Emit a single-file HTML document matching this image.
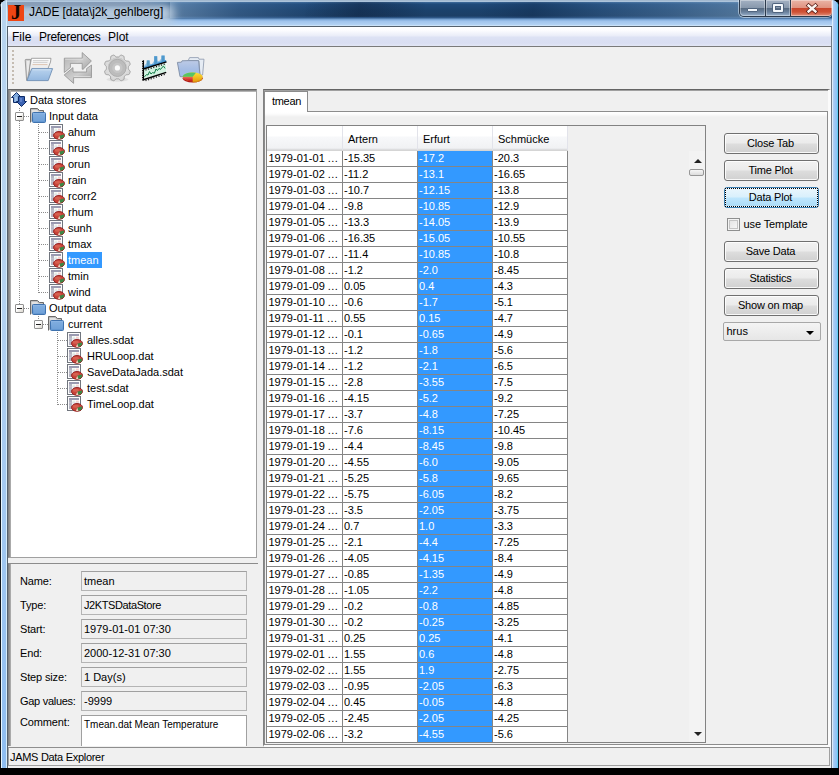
<!DOCTYPE html>
<html><head><meta charset="utf-8"><title>JADE</title>
<style>
*{box-sizing:border-box;margin:0;padding:0}
html,body{width:839px;height:775px;overflow:hidden;background:#000}
body{font-family:"Liberation Sans",sans-serif;font-size:11px;color:#000;position:relative}
.abs{position:absolute}
#win{position:absolute;left:0;top:0;width:839px;height:768px;background:#b9d6f0;border-radius:8px 8px 0 0;overflow:hidden}
#title{position:absolute;left:0;top:0;width:839px;height:27px;
 background:linear-gradient(to bottom,#7f99b6 0,#c5d9ea 1px,#9fb8d2 1.8px,#3d6a9a 2.2px,#1f4a7a 4px,#1b426c 10px,#1c3f66 16px,#2d5686 17.5px,#7aa5d4 19.5px,#9fc3ec 21px,#b4d3f3 25px,#e0f0fc 26px)}
#streak3{position:absolute;left:305px;top:2px;width:120px;height:15px;background:linear-gradient(100deg,rgba(8,22,46,0) 0,rgba(8,22,46,.38) 45%,rgba(8,22,46,.30) 60%,rgba(8,22,46,0) 100%)}
#streak1{position:absolute;left:170px;top:2px;width:230px;height:16px;background:linear-gradient(100deg,rgba(140,175,210,.55) 0,rgba(90,130,175,.35) 30%,rgba(60,100,150,.12) 60%,rgba(30,60,100,0) 100%)}
#streak2{position:absolute;left:480px;top:2px;width:270px;height:16px;background:linear-gradient(100deg,rgba(10,30,60,0) 0,rgba(10,30,60,.25) 20%,rgba(90,130,175,.18) 45%,rgba(120,160,200,.30) 70%,rgba(150,185,215,.45) 100%)}
#titleglow{position:absolute;left:-12px;top:3px;width:186px;height:22px;background:rgba(188,207,226,.96);filter:blur(5px);border-radius:8px}
#titleglow2{position:absolute;left:1px;top:2px;width:160px;height:4px;background:linear-gradient(to right,rgba(140,160,185,.9),rgba(140,160,185,.7) 80%,rgba(140,160,185,0))}
#ttext{position:absolute;left:29px;top:5px;font-size:12px;line-height:15px;letter-spacing:-.08px;color:#000;white-space:nowrap}
#frameL{position:absolute;left:0;top:0;width:7px;height:768px;background:linear-gradient(to right,#10151c 0,#10151c 1px,#e8f6fd 1px,#e8f6fd 2px,rgba(255,255,255,0) 2px,rgba(255,255,255,0) 6px,#d6ecfa 6px,#d6ecfa 7px),linear-gradient(to bottom,#b8d4ee 0,#b4d2f0 300px,#8ebdf0 768px)}
#frameLl{position:absolute;left:7px;top:26px;width:1px;height:742px;background:#55616d}
#frameR{position:absolute;left:832px;top:0;width:7px;height:768px;background:linear-gradient(to right,#dcecfb 0,#dcecfb 1px,#b4d0f2 1px,#9cc6f4 3px,#8cc2f4 5px,#62cdf2 5px,#62cdf2 6px,#0c1c2c 6px,#0c1c2c 7px)}
#frameRl{position:absolute;left:831px;top:26px;width:1px;height:742px;background:#6e7a86}
#client{position:absolute;left:8px;top:27px;width:823px;height:741px;background:#f0f0f0;overflow:hidden}
#ctop{position:absolute;left:7px;top:26px;width:825px;height:1px;background:#55616d}
#menubar{position:absolute;left:0;top:0;width:823px;height:20px;background:linear-gradient(to bottom,#fff 0,#fdfdff 3px,#e9ecf8 9px,#dde2f4 10px,#d9def2 16px,#e2e6f5 19px);border-bottom:1px solid #7a7a7a;font-size:12px}
#menubar span{position:absolute;top:3px;line-height:14px;white-space:nowrap}

#toolbar{position:absolute;left:0;top:20px;width:823px;height:42px}
#grip{position:absolute;left:4px;top:3px;width:2px;height:36px;background:repeating-linear-gradient(to bottom,#c4bcb2 0,#c4bcb2 2px,transparent 2px,transparent 4px)}
.tbi{position:absolute}
#treeP{position:absolute;left:0;top:62px;width:249px;height:469px;background:#fff;border-top:1px solid #646464;border-left:1px solid #828282;border-right:1px solid #a0a0a0;border-bottom:1px solid #a0a0a0}
#treeP:before{content:"";position:absolute;left:0;top:0;width:100%;height:2px;background:linear-gradient(#8a8a8a 0,#8a8a8a 1px,#b4b4b4 1px,#b4b4b4 2px)}
#treeP:after{content:"";position:absolute;left:0;top:0;width:2px;height:100%;background:linear-gradient(to right,#929292 0,#929292 1px,#aaa 1px,#aaa 2px)}
.tn{position:absolute;height:16px;line-height:16px;white-space:nowrap;font-size:11px}
.tn.sel{background:#3399ff;color:#fff;padding:0 3px 0 1px;margin-left:-1px}
.ico{position:absolute;width:16px;height:16px}
.bx{position:absolute;width:9px;height:9px;border:1px solid #919191;background:linear-gradient(135deg,#fff 0,#fff 40%,#d9d5cc 100%);border-radius:1px}
.bx:after{content:"";position:absolute;left:1px;top:3px;width:5px;height:1px;background:#222}
.vd{position:absolute;width:1px;background:repeating-linear-gradient(to bottom,#8c8c8c 0,#8c8c8c 1px,transparent 1px,transparent 2px)}
.hd{position:absolute;height:1px;background:repeating-linear-gradient(to right,#8c8c8c 0,#8c8c8c 1px,transparent 1px,transparent 2px)}
#propP{position:absolute;left:0;top:536px;width:250px;height:183px;border-top:1px solid #8c8c8c;border-left:1px solid #828282;overflow:hidden}
#propP:after{content:"";position:absolute;left:0;top:0;width:2px;height:100%;background:linear-gradient(to right,#929292 0,#929292 1px,#aaa 1px,#aaa 2px)}
.pl{position:absolute;left:11px;height:20px;line-height:20px;white-space:nowrap;letter-spacing:-.15px}
.pf{position:absolute;left:72px;width:166px;height:20px;border:1px solid #b4b4b4;border-top-color:#a0a0a0;line-height:18px;padding-left:2px;white-space:nowrap;background:#f0f0f0}
#status{position:absolute;left:0;top:720px;width:822px;height:19px;border:1px solid #a0a0a0;border-top-color:#8e8e8e;line-height:18px;padding-left:1px;letter-spacing:-.3px;white-space:nowrap}

#rightP{position:absolute;left:255px;top:62px;width:568px;height:658px;border-top:1px solid #646464;border-left:1px solid #828282;border-right:3px solid #fbfbfb;border-bottom:2px solid #fbfbfb}
#rightP:before{content:"";position:absolute;left:0;top:0;width:100%;height:1px;background:#a0a0a0}
#tab{position:absolute;left:0;top:1px;width:44px;height:21px;background:#fff;border:1px solid #8c8c8c;border-bottom:none;line-height:18px;padding-left:7px;z-index:2;letter-spacing:-.3px}
#tabC{position:absolute;left:0;top:21px;width:564px;height:634px;border:1px solid #8c8c8c;background:linear-gradient(to bottom,#fff 0,#fcfcfc 2px,#f0f0f0 5px)}
#sp{position:absolute;left:1px;top:13px;width:440px;height:618px;border:1px solid #828282;background:#f0f0f0;overflow:hidden}
#th{position:absolute;left:0;top:0;width:301px;height:25px;background:linear-gradient(to bottom,#fff 0,#fff 10px,#f7f8fa 11px,#f1f2f4 22px,#e4e5e8 23px,#d5d5d5 24px,#d5d5d5 25px)}
.thc{position:absolute;top:0;height:24px;line-height:26px;padding-left:5px;width:75px;border-right:1px solid #e2e3ea}
#tb{position:absolute;left:0;top:25px;width:301px;height:595px;background:#fff}
.tr{position:absolute;left:0;width:301px;height:16px;border-bottom:1px solid #858585}
.c{position:absolute;top:0;height:15px;line-height:15px;white-space:nowrap;overflow:hidden;padding-left:1px;border-right:1px solid #858585}
.c0{left:0;width:76px;padding-left:1.5px}
.c0 b{font-weight:normal;letter-spacing:.45px}
.c1{left:76px;width:75px}
.c2{left:151px;width:75px;background:#3399ff;color:#fff}
.c3{left:226px;width:75px}
#sb{position:absolute;left:422px;top:25px;width:16px;height:591px;background:#f3f3f3}
.arr{position:absolute;left:5px;width:0;height:0;border-left:4px solid transparent;border-right:4px solid transparent}
#thumb{position:absolute;left:0;top:18px;width:15px;height:7px;border:1px solid #979797;border-radius:2px;background:linear-gradient(to bottom,#f6f6f6,#dcdcdc)}
.btn{position:absolute;left:459px;width:95px;height:21px;padding-right:2px;border:1px solid #707070;border-radius:3px;background:linear-gradient(to bottom,#f2f2f2 0,#ebebeb 9px,#dddddd 10px,#cfcfcf 20px);box-shadow:inset 0 0 0 1px rgba(255,255,255,.85);text-align:center;line-height:19px;white-space:nowrap;letter-spacing:-.2px}
.btn.foc{border-color:#3c7fb1;background:linear-gradient(to bottom,#eaf6fd 0,#d9f0fc 9px,#bee6fd 10px,#a7d9f5 20px)}
.btn.foc:after{content:"";position:absolute;left:0;top:0;right:0;bottom:0;border:1px dotted #000}
#cb{position:absolute;left:462px;top:106px;width:13px;height:13px;border:1px solid #8e8f8f;background:linear-gradient(135deg,#e0e0e0,#fafafa);box-shadow:inset 0 0 0 1px #f4f4f4, inset 0 0 0 2px #c4c4c4}
#cbl{position:absolute;left:478.5px;top:104px;line-height:16px;white-space:nowrap;letter-spacing:-.1px}
#combo{position:absolute;left:458px;top:210px;width:98px;height:19px;border:1px solid #a8a8a8;border-radius:2px;background:linear-gradient(to bottom,#f4f4f4,#e6e6e6);line-height:16px;padding-left:2.5px}
#combo:after{content:"";position:absolute;right:6px;top:8px;border-left:4px solid transparent;border-right:4px solid transparent;border-top:4px solid #000}

#ticon{position:absolute;left:8px;top:5px;width:16px;height:16px;background:#ee4614;overflow:hidden}
#ticon span{position:absolute;left:3px;top:-3px;font-family:"Liberation Serif",serif;font-weight:bold;font-size:20px;line-height:20px;color:#120600}
#capbtn{position:absolute;left:739px;top:0;width:93px;height:17px;border:1px solid #2c3a4c;border-top:none;border-radius:0 0 5px 5px;box-shadow:0 0 0 1px rgba(225,238,250,.55)}
.cbn{position:absolute;top:0;height:16px;border-right:1px solid #2c3a4c;background:linear-gradient(to bottom,#a3b1c3 0,#8999ad 7.5px,#56697f 8px,#6a819d 12px,#9ab2cc 16px);box-shadow:inset 0 0 0 1px rgba(255,255,255,.35)}
.cbn i{position:absolute;display:block}
.cbn.cls{border-right:none;background:linear-gradient(to bottom,#eab4a6 0,#e09482 7.5px,#c8442a 8px,#cf5236 12px,#e0907c 16px)}
</style></head><body>
<svg width="0" height="0" style="position:absolute"><defs>
<linearGradient id="gFold" x1="0" y1="0" x2="0" y2="1"><stop offset="0" stop-color="#8fb8e6"/><stop offset="1" stop-color="#5e93cf"/></linearGradient>
<linearGradient id="gGray" x1="0" y1="0" x2="1" y2="1"><stop offset="0" stop-color="#d8d8d8"/><stop offset="1" stop-color="#9a9a9a"/></linearGradient>
<symbol id="i-root" viewBox="0 0 16 16">
 <path d="M5.5 0.5 L10.5 5.5 L8.5 5.5 L8.5 10.5 L2.5 10.5 L2.5 5.5 L0.5 5.5 Z" fill="#7da7dc" stroke="#0d2a66" stroke-width="1"/>
 <path d="M7.5 4.5 L13.5 4.5 L13.5 9.5 L15.5 9.5 L10.5 14.5 L5.5 9.5 L7.5 9.5 Z" fill="#3c64b4" stroke="#0d2a66" stroke-width="1"/>
 <rect x="4" y="5" width="2" height="4" fill="#a9c8ee" opacity=".7"/><rect x="9" y="6" width="2" height="4" fill="#6d90d4" opacity=".7"/>
</symbol>
<symbol id="i-folder" viewBox="0 0 16 16">
 <path d="M0.5 14.5 L0.5 0.5 L7.5 0.5 L9.5 2.5 L13.5 2.5 L13.5 4.5" fill="#b4b4b4" stroke="#6a6a6a"/>
 <path d="M1.5 13.5 L1.5 1.8 L7 1.8 L8.6 3.4 L12.5 3.4 L12.5 4.5 L2 4.5 Z" fill="#e2e2e2" stroke="none"/>
 <rect x="2.5" y="4.5" width="13" height="10" rx="1" fill="url(#gFold)" stroke="#3f72ae"/>
 <rect x="4" y="6" width="10" height="7" fill="#7aa8dc" opacity=".6"/>
</symbol>
<symbol id="i-leaf" viewBox="0 0 16 16">
 <rect x="0.5" y="0.5" width="13" height="14" fill="#fdfdfd" stroke="#70757d"/>
 <rect x="2" y="2" width="10" height="2" fill="#9a9ab0"/>
 <rect x="2" y="4" width="3" height="9" fill="#b4b4c2"/>
 <rect x="5.6" y="4.6" width="2.6" height="2" fill="#e4efe6"/><rect x="9" y="4.6" width="2.8" height="2" fill="#f4d2cf"/>
 <rect x="5.6" y="7.2" width="2.6" height="2" fill="#ececf2"/><rect x="9" y="7.2" width="2.8" height="2" fill="#f1dedc"/>
 <path d="M2 6.8h10M2 9.6h4" stroke="#d0d0da" stroke-width=".6"/>
 <ellipse cx="10" cy="11.4" rx="5.5" ry="3.9" fill="#c8443a" stroke="#8e1a18" stroke-width=".9"/>
 <ellipse cx="8.8" cy="10.3" rx="3" ry="1.5" fill="#dc6a58" opacity=".75"/>
 <path d="M10.2 11.8 L14.9 10.6 A5.2 3.6 0 0 1 11.4 14.9 Z" fill="#3c8746"/>
 <path d="M10.2 11.8 L11.4 14.9 A5.2 3.6 0 0 1 9 14.9 Z" fill="#ead9c2"/>
</symbol>
</defs></svg>
<div id="win">
 <div id="title"></div><div id="streak1"></div><div id="streak2"></div><div id="streak3"></div><div id="titleglow"></div><div id="titleglow2"></div>
 <div id="frameL"></div><div id="frameLl"></div><div id="frameR"></div><div id="frameRl"></div><div id="ctop"></div>
 <div id="ttext">JADE [data\j2k_gehlberg]</div>
 <div id="client">
  <div id="menubar"><span style="left:4px">File</span><span style="left:31px;letter-spacing:-.3px">Preferences</span><span style="left:100px">Plot</span></div>
<div id="toolbar"><div id="grip"></div>
<svg class="tbi" style="left:12px;top:1px" width="40" height="40" viewBox="0 0 40 40">
 <defs><linearGradient id="gOF" x1="0" y1="0" x2="0" y2="1"><stop offset="0" stop-color="#b9d3ee"/><stop offset="1" stop-color="#93b7df"/></linearGradient>
 <linearGradient id="gPap" x1="0" y1="0" x2="0" y2="1"><stop offset="0" stop-color="#ffffff"/><stop offset="1" stop-color="#d4d4d4"/></linearGradient></defs>
 <path d="M5.2 12.2 Q5.2 11.4 6 11.4 L10.6 11.4 L10 20 L7.4 32.4 L6.6 32.4 Z" fill="#cfcfcf" stroke="#8c8c8c" stroke-width=".8"/>
 <path d="M6.6 13 L9.6 13 L9 20 L7.2 29 Z" fill="#ebebeb"/>
 <path d="M11.5 10.3 L31 10.3 L30.5 14 L28 20.5 L9 31 L9.5 20 Z" fill="url(#gPap)" stroke="#8e8e8e" stroke-width=".8"/>
 <path d="M13 12.6 L28.5 12.6 M13 14.4 L27.5 14.4" stroke="#c4c4c4" stroke-width=".8"/><path d="M12.5 16.6 L27.5 16.6" stroke="#d8b8a0" stroke-width=".8"/>
 <path d="M11.8 20.6 L32.6 20.6 L28.2 32.6 L7 32.6 Z" fill="url(#gOF)" stroke="#6f90b6" stroke-width=".9" stroke-linejoin="round"/>
 <path d="M12.6 21.8 L31 21.8" stroke="#d6e6f6" stroke-width=".8"/>
</svg>
<svg class="tbi" style="left:50px;top:1px" width="40" height="40" viewBox="0 0 40 40">
 <defs><linearGradient id="gAr" x1="0" y1="0" x2="1" y2="1"><stop offset="0" stop-color="#adadad"/><stop offset=".5" stop-color="#cecece"/><stop offset="1" stop-color="#9a9a9a"/></linearGradient></defs>
 <path d="M6.3 10.2 L24.2 10.2 L24.2 4.6 L33.4 13 L25.2 21.2 L24.2 21.2 L24.2 15.4 L12.4 15.4 L12.4 19.5 L6.3 24.5 Z" fill="url(#gAr)" stroke="#929292" stroke-width=".8"/>
 <path d="M33.5 17 L33.5 29.6 L15.6 29.6 L15.6 35.4 L6.2 27 L15 19.6 L15 24 L28.6 24 L28.6 20.6 Z" fill="url(#gAr)" stroke="#929292" stroke-width=".8"/>
 <path d="M7.2 11.2 L24.8 11.2 M16 28.6 L32.6 28.6" stroke="#e4e4e4" stroke-width=".8"/>
</svg>
<svg class="tbi" style="left:90px;top:1px" width="40" height="40" viewBox="0 0 40 40">
 <defs><radialGradient id="gGe" cx=".5" cy=".45" r=".6"><stop offset="0" stop-color="#c6c6c6"/><stop offset=".6" stop-color="#cdcdcd"/><stop offset=".62" stop-color="#dedede"/><stop offset="1" stop-color="#d2d2d2"/></radialGradient></defs>
 <ellipse cx="19.5" cy="31.5" rx="11" ry="2.2" fill="#d8d8d8" opacity=".7"/>
 <path d="M31.78 25.03 L31.51 25.63 L31.22 26.22 L30.49 26.55 L29.54 26.68 L28.61 26.73 L27.90 26.88 L27.55 27.29 L27.18 27.68 L26.79 28.05 L26.38 28.40 L26.23 29.11 L26.18 30.04 L26.05 30.99 L25.72 31.72 L25.13 32.01 L24.53 32.28 L23.91 32.52 L23.29 32.72 L22.54 32.45 L21.78 31.87 L21.08 31.24 L20.48 30.85 L19.94 30.89 L19.40 30.90 L18.86 30.89 L18.32 30.85 L17.72 31.24 L17.02 31.87 L16.26 32.45 L15.51 32.72 L14.89 32.52 L14.27 32.28 L13.67 32.01 L13.08 31.72 L12.75 30.99 L12.62 30.04 L12.57 29.11 L12.42 28.40 L12.01 28.05 L11.62 27.68 L11.25 27.29 L10.90 26.88 L10.19 26.73 L9.26 26.68 L8.31 26.55 L7.58 26.22 L7.29 25.63 L7.02 25.03 L6.78 24.41 L6.58 23.79 L6.85 23.04 L7.43 22.28 L8.06 21.58 L8.45 20.98 L8.41 20.44 L8.40 19.90 L8.41 19.36 L8.45 18.82 L8.06 18.22 L7.43 17.52 L6.85 16.76 L6.58 16.01 L6.78 15.39 L7.02 14.77 L7.29 14.17 L7.58 13.58 L8.31 13.25 L9.26 13.12 L10.19 13.07 L10.90 12.92 L11.25 12.51 L11.62 12.12 L12.01 11.75 L12.42 11.40 L12.57 10.69 L12.62 9.76 L12.75 8.81 L13.08 8.08 L13.67 7.79 L14.27 7.52 L14.89 7.28 L15.51 7.08 L16.26 7.35 L17.02 7.93 L17.72 8.56 L18.32 8.95 L18.86 8.91 L19.40 8.90 L19.94 8.91 L20.48 8.95 L21.08 8.56 L21.78 7.93 L22.54 7.35 L23.29 7.08 L23.91 7.28 L24.53 7.52 L25.13 7.79 L25.72 8.08 L26.05 8.81 L26.18 9.76 L26.23 10.69 L26.38 11.40 L26.79 11.75 L27.18 12.12 L27.55 12.51 L27.90 12.92 L28.61 13.07 L29.54 13.12 L30.49 13.25 L31.22 13.58 L31.51 14.17 L31.78 14.77 L32.02 15.39 L32.22 16.01 L31.95 16.76 L31.37 17.52 L30.74 18.22 L30.35 18.82 L30.39 19.36 L30.40 19.90 L30.39 20.44 L30.35 20.98 L30.74 21.58 L31.37 22.28 L31.95 23.04 L32.22 23.79 L32.02 24.41 L31.78 25.03Z" fill="url(#gGe)" stroke="#9c9c9c" stroke-width=".9"/>
 <circle cx="19.4" cy="19.9" r="8.6" fill="#bcbcbc" stroke="#a8a8a8" stroke-width=".8"/>
 <circle cx="19.4" cy="19.9" r="5.2" fill="#c6c6c6"/>
 <circle cx="19.4" cy="19.9" r="2.6" fill="#fbfbfb"/>
</svg>
<svg class="tbi" style="left:126px;top:1px" width="40" height="40" viewBox="0 0 40 40">
 <path d="M9.8 20.5 L32.5 13.5 L32.5 24 L9.8 31.5 Z" fill="#fff"/>
 <path d="M10 20.6 L10.5 17.5 L12.6 15 L12.8 12.4 L15.6 12.4 L15.8 15.5 L17.8 16.2 L20 13 L20.2 8.2 L23.2 8.2 L23.4 12.5 L25 13.2 L27.3 10.5 L27.5 7.6 L30.6 7.6 L30.8 11.5 L32 14 Z" fill="#8fc2e6"/>
 <path d="M10 20.6 L10 19 L32 12 L32.4 13.8 Z" fill="#3c8fd0"/>
 <rect x="12.8" y="12.4" width="2.8" height="6" fill="#5b9cc4"/><rect x="20.2" y="8.2" width="3" height="8" fill="#4f98cc"/><rect x="27.5" y="7.6" width="3.1" height="6" fill="#4f98cc"/>
 <path d="M9.8 30.5 L9.8 22 L32 15.2 L32.3 24 Z" fill="#d4f2e2"/>
 <path d="M10.5 28.8 L12.5 26.6 L14 27 L15.5 23.6 L17 26 L18.6 24.6 L20.4 25.2 L22 21 L23.4 22.6 L25 20.4 L26.6 21.4 L28 19.4 L29.6 18.2 L31 20.4" fill="none" stroke="#0f7a44" stroke-width="1"/>
 <path d="M9.4 12.2 L9.4 32.4" stroke="#000" stroke-width="1.3"/>
 <path d="M9.4 21 L32.5 13.9" stroke="#000" stroke-width="1.5"/>
 <path d="M9.4 31.8 L32.2 24.4" stroke="#000" stroke-width="1.5"/>
 <path d="M8 13.5h1.4M8 15.8h1.4M8 18.1h1.4M8 20.4h1.4M8 22.7h1.4M8 25h1.4M8 27.3h1.4M8 29.6h1.4M8 31.9h1.4" stroke="#000" stroke-width="1"/>
 <path d="M12 21.2v1.3M14.6 20.4v1.3M17.2 19.6v1.3M19.8 18.8v1.3M22.4 18v1.3M25 17.2v1.3M27.6 16.4v1.3M30.2 15.6v1.3" stroke="#000" stroke-width="1"/>
 <path d="M12 31.8v1.3M14.6 31v1.3M17.2 30.1v1.3M19.8 29.3v1.3M22.4 28.4v1.3M25 27.6v1.3M27.6 26.7v1.3M30.2 25.9v1.3" stroke="#000" stroke-width="1"/>
</svg>
<svg class="tbi" style="left:162px;top:1px" width="40" height="40" viewBox="0 0 40 40">
 <defs><linearGradient id="gFP" x1="0" y1="0" x2="0" y2="1"><stop offset="0" stop-color="#bccae6"/><stop offset=".5" stop-color="#a6bde4"/><stop offset="1" stop-color="#9cc0ee"/></linearGradient>
 <linearGradient id="gPieR" x1="0" y1="0" x2="0" y2="1"><stop offset="0" stop-color="#f06a5a"/><stop offset="1" stop-color="#c01818"/></linearGradient>
 <linearGradient id="gPieY" x1="0" y1="0" x2="0" y2="1"><stop offset="0" stop-color="#fbe23a"/><stop offset="1" stop-color="#e8a010"/></linearGradient></defs>
 <path d="M18 13 L19.6 9.6 L28.4 9.6 L29 11.2 L34 11.2 L32.6 27 L30 27 L29 13 Z" fill="#e6ecf4" stroke="#8a97ab" stroke-width=".8"/>
 <path d="M7.4 14.4 L11.4 14.2 L12 12.8 L18.4 12.6 L28.6 12.6 L30 27.6 L26 30 L10 28.6 Z" fill="url(#gFP)" stroke="#7e8ca4" stroke-width=".9" stroke-linejoin="round"/>
 <ellipse cx="22.7" cy="30.2" rx="10" ry="4.4" fill="#b01414"/>
 <path d="M22.7 30.2 L32.7 30.2 A10 4.4 0 0 1 22.7 34.6 Z" fill="#d89010"/>
 <ellipse cx="22.7" cy="28.8" rx="10" ry="4.4" fill="url(#gPieY)"/>
 <path d="M22.7 28.8 L22.7 33.2 A10 4.4 0 0 1 12.7 28.8 Z" fill="url(#gPieR)"/>
 <path d="M22.7 28.8 L12.7 28.8 A10 4.4 0 0 1 26 24.65 Z" fill="#56c466"/>
</svg>
</div>

<div id="treeP">
<div class="vd" style="left:10px;top:18px;height:4px"></div>
<div class="vd" style="left:10px;top:31px;height:183px"></div>
<div class="hd" style="left:15px;top:26px;width:6px"></div>
<div class="hd" style="left:15px;top:218px;width:6px"></div>
<div class="vd" style="left:29px;top:34px;height:169px"></div>
<div class="hd" style="left:30px;top:42px;width:9px"></div>
<div class="hd" style="left:30px;top:58px;width:9px"></div>
<div class="hd" style="left:30px;top:74px;width:9px"></div>
<div class="hd" style="left:30px;top:90px;width:9px"></div>
<div class="hd" style="left:30px;top:106px;width:9px"></div>
<div class="hd" style="left:30px;top:122px;width:9px"></div>
<div class="hd" style="left:30px;top:138px;width:9px"></div>
<div class="hd" style="left:30px;top:154px;width:9px"></div>
<div class="hd" style="left:30px;top:170px;width:9px"></div>
<div class="hd" style="left:30px;top:186px;width:9px"></div>
<div class="hd" style="left:30px;top:202px;width:9px"></div>
<div class="vd" style="left:29px;top:226px;height:4px"></div>
<div class="hd" style="left:34px;top:234px;width:5px"></div>
<div class="vd" style="left:48px;top:242px;height:73px"></div>
<div class="hd" style="left:49px;top:250px;width:9px"></div>
<div class="hd" style="left:49px;top:266px;width:9px"></div>
<div class="hd" style="left:49px;top:282px;width:9px"></div>
<div class="hd" style="left:49px;top:298px;width:9px"></div>
<div class="hd" style="left:49px;top:314px;width:9px"></div>
<svg class="ico" style="left:2px;top:2px" viewBox="0 0 16 16"><use href="#i-root"/></svg><div class="tn" style="left:21px;top:2px">Data stores</div>
<div class="bx" style="left:6px;top:22px"></div><svg class="ico" style="left:21px;top:18px" viewBox="0 0 16 16"><use href="#i-folder"/></svg><div class="tn" style="left:40px;top:18px">Input data</div>
<svg class="ico" style="left:40px;top:34px" viewBox="0 0 16 16"><use href="#i-leaf"/></svg><div class="tn" style="left:59px;top:34px">ahum</div>
<svg class="ico" style="left:40px;top:50px" viewBox="0 0 16 16"><use href="#i-leaf"/></svg><div class="tn" style="left:59px;top:50px">hrus</div>
<svg class="ico" style="left:40px;top:66px" viewBox="0 0 16 16"><use href="#i-leaf"/></svg><div class="tn" style="left:59px;top:66px">orun</div>
<svg class="ico" style="left:40px;top:82px" viewBox="0 0 16 16"><use href="#i-leaf"/></svg><div class="tn" style="left:59px;top:82px">rain</div>
<svg class="ico" style="left:40px;top:98px" viewBox="0 0 16 16"><use href="#i-leaf"/></svg><div class="tn" style="left:59px;top:98px">rcorr2</div>
<svg class="ico" style="left:40px;top:114px" viewBox="0 0 16 16"><use href="#i-leaf"/></svg><div class="tn" style="left:59px;top:114px">rhum</div>
<svg class="ico" style="left:40px;top:130px" viewBox="0 0 16 16"><use href="#i-leaf"/></svg><div class="tn" style="left:59px;top:130px">sunh</div>
<svg class="ico" style="left:40px;top:146px" viewBox="0 0 16 16"><use href="#i-leaf"/></svg><div class="tn" style="left:59px;top:146px">tmax</div>
<svg class="ico" style="left:40px;top:162px" viewBox="0 0 16 16"><use href="#i-leaf"/></svg><div class="tn sel" style="left:59px;top:162px">tmean</div>
<svg class="ico" style="left:40px;top:178px" viewBox="0 0 16 16"><use href="#i-leaf"/></svg><div class="tn" style="left:59px;top:178px">tmin</div>
<svg class="ico" style="left:40px;top:194px" viewBox="0 0 16 16"><use href="#i-leaf"/></svg><div class="tn" style="left:59px;top:194px">wind</div>
<div class="bx" style="left:6px;top:214px"></div><svg class="ico" style="left:21px;top:210px" viewBox="0 0 16 16"><use href="#i-folder"/></svg><div class="tn" style="left:40px;top:210px">Output data</div>
<div class="bx" style="left:25px;top:230px"></div><svg class="ico" style="left:39px;top:226px" viewBox="0 0 16 16"><use href="#i-folder"/></svg><div class="tn" style="left:59px;top:226px">current</div>
<svg class="ico" style="left:58px;top:242px" viewBox="0 0 16 16"><use href="#i-leaf"/></svg><div class="tn" style="left:78px;top:242px">alles.sdat</div>
<svg class="ico" style="left:58px;top:258px" viewBox="0 0 16 16"><use href="#i-leaf"/></svg><div class="tn" style="left:78px;top:258px">HRULoop.dat</div>
<svg class="ico" style="left:58px;top:274px" viewBox="0 0 16 16"><use href="#i-leaf"/></svg><div class="tn" style="left:78px;top:274px">SaveDataJada.sdat</div>
<svg class="ico" style="left:58px;top:290px" viewBox="0 0 16 16"><use href="#i-leaf"/></svg><div class="tn" style="left:78px;top:290px">test.sdat</div>
<svg class="ico" style="left:58px;top:306px" viewBox="0 0 16 16"><use href="#i-leaf"/></svg><div class="tn" style="left:78px;top:306px">TimeLoop.dat</div>
</div>
<div id="propP">
<div class="pl" style="top:7px">Name:</div><div class="pf" style="top:7px">tmean</div>
<div class="pl" style="top:31px">Type:</div><div class="pf" style="top:31px;letter-spacing:-.4px">J2KTSDataStore</div>
<div class="pl" style="top:55px">Start:</div><div class="pf" style="top:55px">1979-01-01 07:30</div>
<div class="pl" style="top:79px">End:</div><div class="pf" style="top:79px">2000-12-31 07:30</div>
<div class="pl" style="top:103px">Step size:</div><div class="pf" style="top:103px">1 Day(s)</div>
<div class="pl" style="top:127px;letter-spacing:-.28px">Gap values:</div><div class="pf" style="top:127px">-9999</div>
<div class="pl" style="top:150px;height:16px;line-height:16px">Comment:</div><div class="pf" style="top:151px;height:40px;background:#fff;font-size:10px;line-height:18px;border-color:#a0a0a0">Tmean.dat Mean Temperature</div>
</div>

<div id="rightP">
 <div id="tab">tmean</div>
 <div id="tabC">
  <div id="sp">
   <div id="th"><div class="thc" style="left:0;width:76px"></div><div class="thc" style="left:76px">Artern</div><div class="thc" style="left:151px">Erfurt</div><div class="thc" style="left:226px">Schmücke</div></div>
   <div id="tb">
<div class="tr" style="top:0px"><span class="c c0">1979-01-01 <b>...</b></span><span class="c c1">-15.35</span><span class="c c2">-17.2</span><span class="c c3">-20.3</span></div>
<div class="tr" style="top:16px"><span class="c c0">1979-01-02 <b>...</b></span><span class="c c1">-11.2</span><span class="c c2">-13.1</span><span class="c c3">-16.65</span></div>
<div class="tr" style="top:32px"><span class="c c0">1979-01-03 <b>...</b></span><span class="c c1">-10.7</span><span class="c c2">-12.15</span><span class="c c3">-13.8</span></div>
<div class="tr" style="top:48px"><span class="c c0">1979-01-04 <b>...</b></span><span class="c c1">-9.8</span><span class="c c2">-10.85</span><span class="c c3">-12.9</span></div>
<div class="tr" style="top:64px"><span class="c c0">1979-01-05 <b>...</b></span><span class="c c1">-13.3</span><span class="c c2">-14.05</span><span class="c c3">-13.9</span></div>
<div class="tr" style="top:80px"><span class="c c0">1979-01-06 <b>...</b></span><span class="c c1">-16.35</span><span class="c c2">-15.05</span><span class="c c3">-10.55</span></div>
<div class="tr" style="top:96px"><span class="c c0">1979-01-07 <b>...</b></span><span class="c c1">-11.4</span><span class="c c2">-10.85</span><span class="c c3">-10.8</span></div>
<div class="tr" style="top:112px"><span class="c c0">1979-01-08 <b>...</b></span><span class="c c1">-1.2</span><span class="c c2">-2.0</span><span class="c c3">-8.45</span></div>
<div class="tr" style="top:128px"><span class="c c0">1979-01-09 <b>...</b></span><span class="c c1">0.05</span><span class="c c2">0.4</span><span class="c c3">-4.3</span></div>
<div class="tr" style="top:144px"><span class="c c0">1979-01-10 <b>...</b></span><span class="c c1">-0.6</span><span class="c c2">-1.7</span><span class="c c3">-5.1</span></div>
<div class="tr" style="top:160px"><span class="c c0">1979-01-11 <b>...</b></span><span class="c c1">0.55</span><span class="c c2">0.15</span><span class="c c3">-4.7</span></div>
<div class="tr" style="top:176px"><span class="c c0">1979-01-12 <b>...</b></span><span class="c c1">-0.1</span><span class="c c2">-0.65</span><span class="c c3">-4.9</span></div>
<div class="tr" style="top:192px"><span class="c c0">1979-01-13 <b>...</b></span><span class="c c1">-1.2</span><span class="c c2">-1.8</span><span class="c c3">-5.6</span></div>
<div class="tr" style="top:208px"><span class="c c0">1979-01-14 <b>...</b></span><span class="c c1">-1.2</span><span class="c c2">-2.1</span><span class="c c3">-6.5</span></div>
<div class="tr" style="top:224px"><span class="c c0">1979-01-15 <b>...</b></span><span class="c c1">-2.8</span><span class="c c2">-3.55</span><span class="c c3">-7.5</span></div>
<div class="tr" style="top:240px"><span class="c c0">1979-01-16 <b>...</b></span><span class="c c1">-4.15</span><span class="c c2">-5.2</span><span class="c c3">-9.2</span></div>
<div class="tr" style="top:256px"><span class="c c0">1979-01-17 <b>...</b></span><span class="c c1">-3.7</span><span class="c c2">-4.8</span><span class="c c3">-7.25</span></div>
<div class="tr" style="top:272px"><span class="c c0">1979-01-18 <b>...</b></span><span class="c c1">-7.6</span><span class="c c2">-8.15</span><span class="c c3">-10.45</span></div>
<div class="tr" style="top:288px"><span class="c c0">1979-01-19 <b>...</b></span><span class="c c1">-4.4</span><span class="c c2">-8.45</span><span class="c c3">-9.8</span></div>
<div class="tr" style="top:304px"><span class="c c0">1979-01-20 <b>...</b></span><span class="c c1">-4.55</span><span class="c c2">-6.0</span><span class="c c3">-9.05</span></div>
<div class="tr" style="top:320px"><span class="c c0">1979-01-21 <b>...</b></span><span class="c c1">-5.25</span><span class="c c2">-5.8</span><span class="c c3">-9.65</span></div>
<div class="tr" style="top:336px"><span class="c c0">1979-01-22 <b>...</b></span><span class="c c1">-5.75</span><span class="c c2">-6.05</span><span class="c c3">-8.2</span></div>
<div class="tr" style="top:352px"><span class="c c0">1979-01-23 <b>...</b></span><span class="c c1">-3.5</span><span class="c c2">-2.05</span><span class="c c3">-3.75</span></div>
<div class="tr" style="top:368px"><span class="c c0">1979-01-24 <b>...</b></span><span class="c c1">0.7</span><span class="c c2">1.0</span><span class="c c3">-3.3</span></div>
<div class="tr" style="top:384px"><span class="c c0">1979-01-25 <b>...</b></span><span class="c c1">-2.1</span><span class="c c2">-4.4</span><span class="c c3">-7.25</span></div>
<div class="tr" style="top:400px"><span class="c c0">1979-01-26 <b>...</b></span><span class="c c1">-4.05</span><span class="c c2">-4.15</span><span class="c c3">-8.4</span></div>
<div class="tr" style="top:416px"><span class="c c0">1979-01-27 <b>...</b></span><span class="c c1">-0.85</span><span class="c c2">-1.35</span><span class="c c3">-4.9</span></div>
<div class="tr" style="top:432px"><span class="c c0">1979-01-28 <b>...</b></span><span class="c c1">-1.05</span><span class="c c2">-2.2</span><span class="c c3">-4.8</span></div>
<div class="tr" style="top:448px"><span class="c c0">1979-01-29 <b>...</b></span><span class="c c1">-0.2</span><span class="c c2">-0.8</span><span class="c c3">-4.85</span></div>
<div class="tr" style="top:464px"><span class="c c0">1979-01-30 <b>...</b></span><span class="c c1">-0.2</span><span class="c c2">-0.25</span><span class="c c3">-3.25</span></div>
<div class="tr" style="top:480px"><span class="c c0">1979-01-31 <b>...</b></span><span class="c c1">0.25</span><span class="c c2">0.25</span><span class="c c3">-4.1</span></div>
<div class="tr" style="top:496px"><span class="c c0">1979-02-01 <b>...</b></span><span class="c c1">1.55</span><span class="c c2">0.6</span><span class="c c3">-4.8</span></div>
<div class="tr" style="top:512px"><span class="c c0">1979-02-02 <b>...</b></span><span class="c c1">1.55</span><span class="c c2">1.9</span><span class="c c3">-2.75</span></div>
<div class="tr" style="top:528px"><span class="c c0">1979-02-03 <b>...</b></span><span class="c c1">-0.95</span><span class="c c2">-2.05</span><span class="c c3">-6.3</span></div>
<div class="tr" style="top:544px"><span class="c c0">1979-02-04 <b>...</b></span><span class="c c1">0.45</span><span class="c c2">-0.05</span><span class="c c3">-4.8</span></div>
<div class="tr" style="top:560px"><span class="c c0">1979-02-05 <b>...</b></span><span class="c c1">-2.45</span><span class="c c2">-2.05</span><span class="c c3">-4.25</span></div>
<div class="tr" style="top:576px"><span class="c c0">1979-02-06 <b>...</b></span><span class="c c1">-3.2</span><span class="c c2">-4.55</span><span class="c c3">-5.6</span></div>
   </div>
   <div id="sb"><div class="arr" style="top:8px;border-bottom:4px solid #222"></div><div id="thumb"></div><div class="arr" style="top:581px;border-top:4px solid #222"></div></div>
  </div>
  <div class="btn" style="top:21px">Close Tab</div>
  <div class="btn" style="top:48px">Time Plot</div>
  <div class="btn foc" style="top:75px">Data Plot</div>
  <div id="cb"></div><div id="cbl">use Template</div>
  <div class="btn" style="top:129px">Save Data</div>
  <div class="btn" style="top:156px">Statistics</div>
  <div class="btn" style="top:183px">Show on map</div>
  <div id="combo">hrus</div>
 </div>
</div>

<div id="status">JAMS Data Explorer</div>
 </div>
<div id="ticon"><span>J</span></div>
<div id="capbtn">
 <div class="cbn" style="left:0;width:26px;border-radius:0 0 0 4px"><i style="left:7px;top:8px;width:11px;height:4px;background:#f4f8fc;border:1px solid #50647e;border-radius:1px"></i></div>
 <div class="cbn" style="left:26px;width:25px"><i style="left:7px;top:4px;width:10px;height:8px;border:2px solid #f4f8fc;box-shadow:0 0 0 1px #50647e, inset 0 0 0 1px #50647e;border-radius:1px"></i></div>
 <div class="cbn cls" style="left:51px;width:41px;border-radius:0 0 4px 0"><svg width="16" height="13" viewBox="0 0 16 13" style="position:absolute;left:12.6px;top:1.8px"><path d="M4.6 3.6 L11.4 9.4 M11.4 3.6 L4.6 9.4" stroke="#5a2018" stroke-width="4" stroke-linecap="square"/><path d="M4.6 3.6 L11.4 9.4 M11.4 3.6 L4.6 9.4" stroke="#fbf4f0" stroke-width="2.5" stroke-linecap="square"/></svg></div>
</div>

</div>
</body></html>
